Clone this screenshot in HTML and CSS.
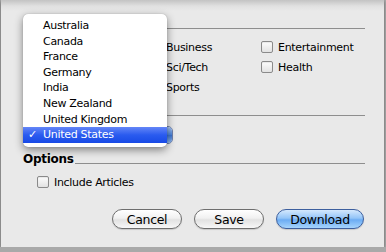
FILE: index.html
```html
<!DOCTYPE html>
<html>
<head>
<meta name="viewport" content="width=device-width, minimum-scale=1.0">
<link rel="stylesheet" href="styles.css">
</head>
<body>
<div class="sheet">
  <div class="group-head"><span class="rule"></span></div>
  <div class="check-columns">
    <div class="check-col"></div>
    <div class="check-col">
      <label class="check"><span class="box"></span>Business</label>
      <label class="check"><span class="box"></span>Sci/Tech</label>
      <label class="check"><span class="box"></span>Sports</label>
    </div>
    <div class="check-col">
      <label class="check"><span class="box"></span>Entertainment</label>
      <label class="check"><span class="box"></span>Health</label>
    </div>
  </div>

  <div class="group-head country-head"><span class="rule"></span></div>
  <div class="popup-row">
    <div class="popup-button">
      <span class="popup-value"></span>
      <span class="popup-arrows"></span>
    </div>
  </div>

  <div class="group-head options-head"><span class="group-label">Options</span><span class="rule"></span></div>
  <div class="options-row">
    <label class="check"><span class="box"></span>Include Articles</label>
  </div>

  <div class="button-row">
    <button class="aqua">Cancel</button>
    <button class="aqua">Save</button>
    <button class="aqua default">Download</button>
  </div>

  <!-- the open country menu lies over the sheet -->
  <ul class="menu">
    <li>Australia</li>
    <li>Canada</li>
    <li>France</li>
    <li>Germany</li>
    <li>India</li>
    <li>New Zealand</li>
    <li>United Kingdom</li>
    <li class="selected"><span class="tick">&#10003;</span>United States</li>
  </ul>
</div>
</body>
</html>
```

FILE: styles.css
```css
body {
  margin: 0;
  overflow: hidden;
  background: #a9a9a9;
  font-family: "DejaVu Sans", sans-serif;
  font-size: 11px;
  letter-spacing: -0.3px;
  color: #000;
}

.sheet {
  position: relative;
  box-sizing: border-box;
  width: 383px;
  height: 247px;
  margin-left: 1px;
  padding: 17px 19px 0 22px;
  background: linear-gradient(#c3c3c3, #e0e0e0 6px, #e9e9e9 11px);
  box-shadow: 0 1px 3px rgba(0, 0, 0, 0.45);
}

/* group headers: bold label followed by a thin rule */

.group-head {
  display: flex;
  align-items: flex-end;
  height: 15px;
}

.group-label {
  font-size: 12px;
  font-weight: bold;
  line-height: 15px;
  padding-right: 2px;
}

.rule {
  flex: 1;
  height: 1px;
  margin-bottom: 3px;
  background: #8e8e8e;
}

.country-head {
  margin-top: 7px;
}

.options-head {
  margin-top: 8px;
}

.check-columns {
  display: flex;
  height: 60px;
  margin-top: 5px;
  padding-left: 14px;
}

.check-col {
  flex: 0 0 112px;
}

.check {
  display: flex;
  align-items: center;
  gap: 5px;
  height: 20px;
  white-space: nowrap;
}

.box {
  box-sizing: border-box;
  width: 12px;
  height: 12px;
  border: 1px solid #8a8a8a;
  border-radius: 2px;
  background: linear-gradient(#fdfdfd, #e2e2e2);
  box-shadow: inset 0 1px 1px rgba(0, 0, 0, 0.08);
}

.popup-row {
  margin-top: 7px;
  padding-left: 14px;
}

.popup-button {
  display: flex;
  box-sizing: border-box;
  width: 136px;
  height: 18px;
  border: 1px solid #6f7fa8;
  border-radius: 5px;
  background: linear-gradient(#fff, #e8e8e8);
  overflow: hidden;
}

.popup-value {
  flex: 1;
}

.popup-arrows {
  width: 18px;
  background: linear-gradient(#a9c6f2, #4a83d9 50%, #3b73cf 51%, #8fb8f0);
  border-left: 1px solid #5a79b0;
}

.options-row {
  margin-top: 5px;
  padding-left: 14px;
}

.button-row {
  display: flex;
  justify-content: flex-end;
  gap: 12px;
  margin-top: 17px;
  padding-right: 1px;
}

.aqua {
  box-sizing: border-box;
  width: 70px;
  height: 20px;
  padding: 0;
  border: 1px solid #6e6e6e;
  border-radius: 10px;
  background: linear-gradient(#ffffff, #f1f1f1 45%, #e2e2e2 55%, #f7f7f7);
  box-shadow: 0 1px 1px rgba(0, 0, 0, 0.15);
  font-family: "DejaVu Sans", sans-serif;
  font-size: 12.5px;
  letter-spacing: -0.3px;
  color: #000;
}

.aqua.default {
  width: 88px;
  border-color: #3d5f9e;
  background: linear-gradient(#d4e8fd, #94c5f8 45%, #6cacf3 55%, #a6d4fc);
}

.menu {
  position: absolute;
  left: 22px;
  top: 14px;
  width: 144px;
  margin: 0;
  padding: 4px 0;
  list-style: none;
  background: #fff;
  border-radius: 5px;
  box-shadow: 0 3px 9px rgba(0, 0, 0, 0.45), 0 0 1px rgba(0, 0, 0, 0.3);
}

.menu li {
  position: relative;
  height: 15.6px;
  line-height: 15.6px;
  padding-left: 20px;
}

.menu li.selected {
  background: linear-gradient(#6486f7, #2a5bef 50%, #184ae6);
  color: #fff;
}

.tick {
  position: absolute;
  left: 5px;
  font-weight: bold;
}
```
